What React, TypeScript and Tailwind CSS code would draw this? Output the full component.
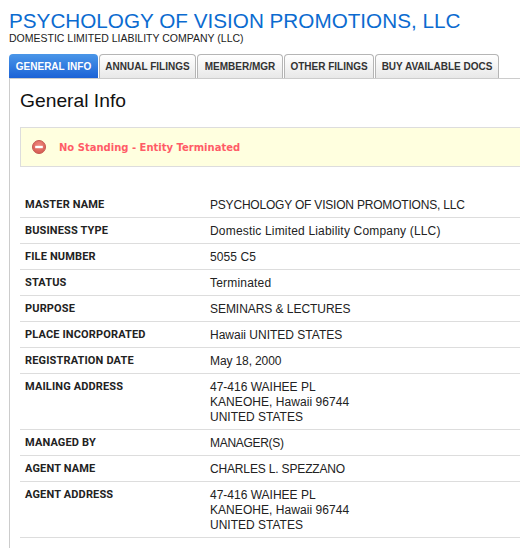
const tabs: [string, string][] = [
  ["ANNUAL FILINGS", "w-[97px]"],
  ["MEMBER/MGR", "w-[86px]"],
  ["OTHER FILINGS", "w-[90px]"],
  ["BUY AVAILABLE DOCS", "w-[124px]"],
];

const rows: [string, [string, string][]][] = [
  ["MASTER NAME", [["PSYCHOLOGY OF VISION PROMOTIONS, LLC", "tracking-[-0.2px]"]]],
  ["BUSINESS TYPE", [["Domestic Limited Liability Company (LLC)", "tracking-[0.18px]"]]],
  ["FILE NUMBER", [["5055 C5", "tracking-[0.1px]"]]],
  ["STATUS", [["Terminated", "tracking-[0.2px]"]]],
  ["PURPOSE", [["SEMINARS & LECTURES", "tracking-[-0.05px]"]]],
  ["PLACE INCORPORATED", [["Hawaii UNITED STATES", "tracking-normal"]]],
  ["REGISTRATION DATE", [["May 18, 2000", "tracking-[-0.12px]"]]],
  [
    "MAILING ADDRESS",
    [
      ["47-416 WAIHEE PL", "tracking-normal"],
      ["KANEOHE, Hawaii 96744", "tracking-[0.05px]"],
      ["UNITED STATES", "tracking-normal"],
    ],
  ],
  ["MANAGED BY", [["MANAGER(S)", "tracking-[-0.3px]"]]],
  ["AGENT NAME", [["CHARLES L. SPEZZANO", "tracking-[-0.16px]"]]],
  [
    "AGENT ADDRESS",
    [
      ["47-416 WAIHEE PL", "tracking-normal"],
      ["KANEOHE, Hawaii 96744", "tracking-[0.05px]"],
      ["UNITED STATES", "tracking-normal"],
    ],
  ],
];

export default function App() {
  return (
    <div className="w-[520px] h-[548px] overflow-hidden bg-white font-['Liberation_Sans',Arial,sans-serif] text-[#222]">
      <div className="w-[700px] pl-[9px]">
        <h1 className="pt-[9px] text-[20.7px] leading-[24px] text-[#0b6bd0] whitespace-nowrap">
          PSYCHOLOGY OF VISION PROMOTIONS, LLC
        </h1>
        <div className="text-[10.5px] leading-[12px] mt-[-1px] text-[#222] whitespace-nowrap">
          DOMESTIC LIMITED LIABILITY COMPANY (LLC)
        </div>
        <div className="mt-[10px] flex gap-[1px] h-[24px] items-stretch">
          <div className="flex items-center justify-center w-[89px] rounded-t-[4px] bg-gradient-to-b from-[#4a96e8] to-[#1c62d6] text-white font-bold text-[10px] whitespace-nowrap">
            GENERAL INFO
          </div>
          {tabs.map(([t, w]) => (
            <div
              key={t}
              className={`flex items-center justify-center ${w} rounded-t-[4px] border border-b-0 border-[#b5b5b5] bg-gradient-to-b from-white to-[#e8e8e8] text-[#333] font-bold text-[10px] whitespace-nowrap`}
            >
              {t}
            </div>
          ))}
        </div>
        <div className="border-l border-t border-[#ccc] pl-[10px] h-[480px]">
          <h2 className="pt-[11px] text-[19.25px] leading-[22px] text-[#111]">General Info</h2>
          <div className="mt-[15px] h-[40px] border border-[#ddd] bg-[#ffffdf] flex items-center pl-[11px]">
            <svg width="14" height="14" viewBox="0 0 14 14">
              <defs>
                <radialGradient id="stop" cx="50%" cy="35%" r="70%">
                  <stop offset="0%" stopColor="#f08a80" />
                  <stop offset="100%" stopColor="#d4554c" />
                </radialGradient>
              </defs>
              <circle cx="7" cy="7" r="6.5" fill="url(#stop)" stroke="#c45a52" />
              <rect x="3.2" y="5.8" width="7.6" height="2.4" fill="#fff" />
            </svg>
            <span className="ml-[13px] font-['DejaVu_Sans',Verdana,sans-serif] font-bold text-[10px] text-[#ff5c67]">
              No Standing - Entity Terminated
            </span>
          </div>
          <div className="mt-[25px]">
            {rows.map(([label, lines]) => (
              <div key={label} className="flex border-b border-[#ddd] pt-[6px] pb-[4px]">
                <div className="w-[190px] shrink-0 pl-[5px] font-['Roboto',sans-serif] font-bold text-[11px] leading-[13px] tracking-[0.15px] text-[#222]">
                  {label}
                </div>
                <div className="text-[12px] leading-[15px] text-[#222]">
                  {lines.map(([l, t]) => (
                    <div key={l} className={t}>{l}</div>
                  ))}
                </div>
              </div>
            ))}
          </div>
        </div>
      </div>
    </div>
  );
}
